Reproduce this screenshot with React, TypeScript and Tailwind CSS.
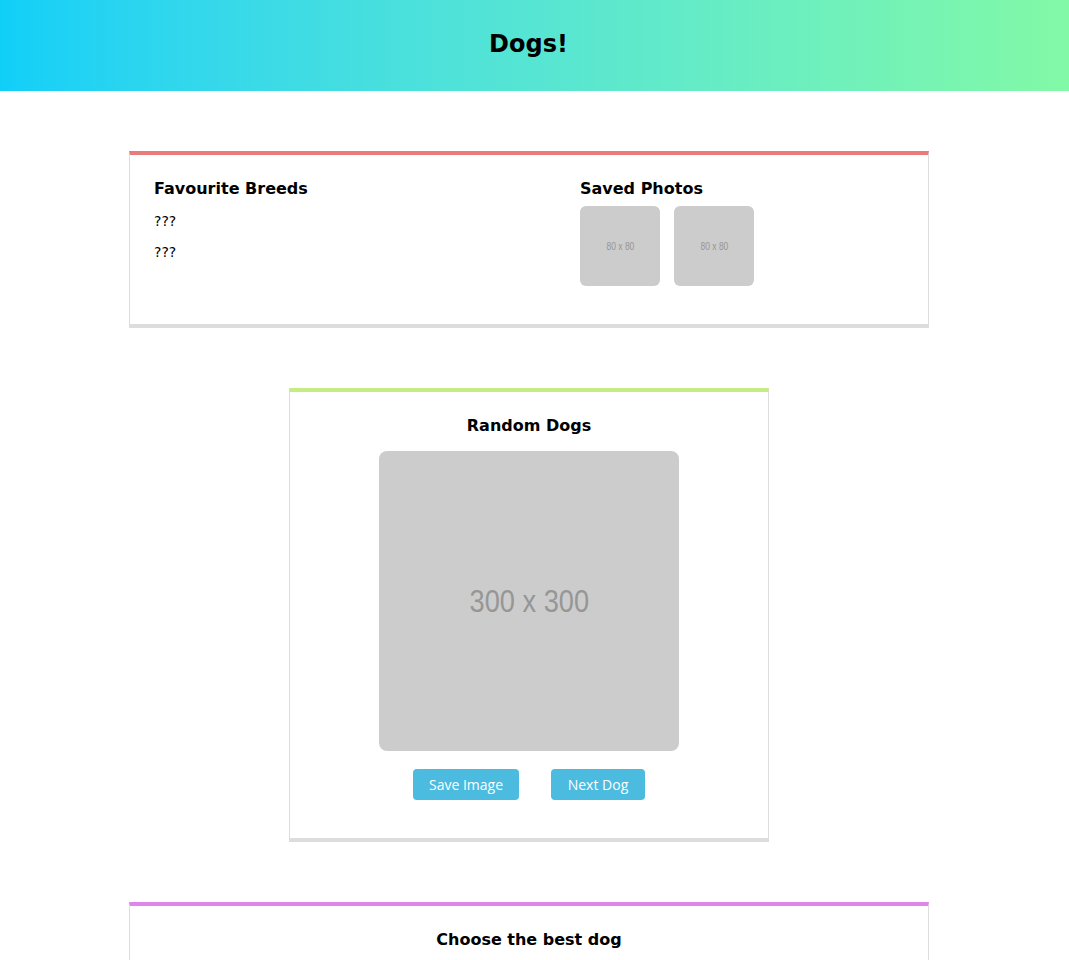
import {ReactNode} from "react";

function Card({color, width, children}: { color: string, width: string, children: ReactNode }) {
    return (
        <section className={`${width} ${color} bg-white border-x border-x-[#dddddd] border-t-4 border-b-4 border-b-[#dddddd]`}>
            {children}
        </section>
    )
}

function Placeholder({size, label, className}: { size: string, label: string, className: string }) {
    return (
        <div className={`${size} flex items-center justify-center bg-[#cccccc] text-[#969696] ${className}`}
             style={{fontFamily: '"Liberation Sans", Arial, sans-serif'}}>
            <span className="inline-block scale-x-[0.85]">{label}</span>
        </div>
    )
}

export default function App() {
    return (
        <div className="min-h-screen bg-white text-black" style={{fontFamily: '"DejaVu Sans", Verdana, sans-serif'}}>
            <header className="h-[91px] flex items-center justify-center pr-[12px] bg-gradient-to-r from-[#10cff8] to-[#82f9a6]">
                <h1 className="text-2xl font-bold -mt-[3px]">Dogs!</h1>
            </header>

            <main className="flex flex-col items-center gap-[60px] pt-[60px] pr-[11px]">
                <Card color="border-t-[#e97b7b]" width="w-[800px]">
                    <div className="flex px-6 pt-[25px] pb-[38px]">
                        <div className="w-[426px]">
                            <h2 className="text-base font-bold leading-[18px] mb-[15px]">Favourite Breeds</h2>
                            <p className="text-sm leading-4 mb-[15px]">???</p>
                            <p className="text-sm leading-4">???</p>
                        </div>
                        <div>
                            <h2 className="text-base font-bold leading-[18px] mb-2">Saved Photos</h2>
                            <div className="flex gap-[14px]">
                                <Placeholder size="w-20 h-20" label="80 x 80" className="rounded-md text-[10px]"/>
                                <Placeholder size="w-20 h-20" label="80 x 80" className="rounded-md text-[10px]"/>
                            </div>
                        </div>
                    </div>
                </Card>

                <Card color="border-t-[#c4ec82]" width="w-[480px]">
                    <div className="flex flex-col items-center pt-[25px] pb-[38px]">
                        <h2 className="text-base font-bold leading-[18px] mb-4">Random Dogs</h2>
                        <Placeholder size="w-[300px] h-[300px]" label="300 x 300"
                                     className="rounded-lg text-[32px]"/>
                        <div className="flex gap-8 mt-[18px]" style={{fontFamily: '"Open Sans", sans-serif'}}>
                            <button type="button"
                                    className="h-[31px] w-[106px] rounded-sm bg-[#4bbbe0] text-white text-sm">
                                Save Image
                            </button>
                            <button type="button"
                                    className="h-[31px] w-[94px] rounded-sm bg-[#4bbbe0] text-white text-sm">
                                Next Dog
                            </button>
                        </div>
                    </div>
                </Card>

                <Card color="border-t-[#de84ea]" width="w-[800px]">
                    <div className="flex flex-col items-center pt-[25px] pb-10">
                        <h2 className="text-base font-bold leading-[18px]">Choose the best dog</h2>
                        <div className="h-40"/>
                    </div>
                </Card>
            </main>
        </div>
    )
}
